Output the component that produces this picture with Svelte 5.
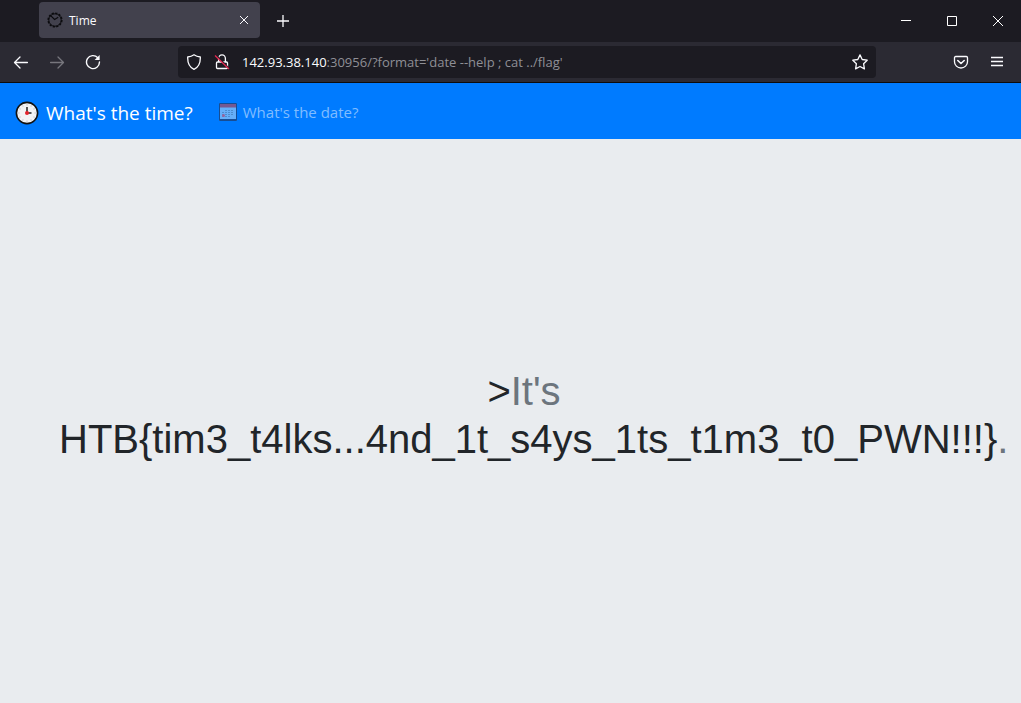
<script>
  let address = $state("142.93.38.140:30956/?format='date --help ; cat ../flag'");
  const host = $derived(address.split(':')[0]);
  const rest = $derived(address.slice(host.length));
  const ticks = Array.from({ length: 12 }, (_, i) => i * 30);
</script>

<div class="window">
  <header class="tabs">
    <div class="tab">
      <svg class="favicon" width="16" height="16" viewBox="0 0 16 16" fill="none" stroke="#0b0b0e" aria-hidden="true">
        <circle cx="8" cy="8" r="6.2" stroke-width="1" />
        <circle cx="8" cy="8" r="6.8" stroke-width="1.6" stroke-dasharray="2.2 1.36" />
        <path d="M3.4 3.4 7.6 7.4l3.6-2.2" stroke-width="1.2" />
      </svg>
      <span class="title">Time</span>
      <button aria-label="Close tab">
        <svg width="10" height="10" viewBox="0 0 10 10" stroke="#fbfbfe"><path d="m1 1 8 8M9 1 1 9" /></svg>
      </button>
    </div>
    <button class="new" aria-label="New tab">
      <svg width="14" height="14" viewBox="0 0 14 14" stroke="#fbfbfe" stroke-width="1.3"><path d="M1 7h12M7 1v12" /></svg>
    </button>
    <div class="controls">
      <button aria-label="Minimize">
        <svg width="12" height="12" viewBox="0 0 12 12" stroke="#fff"><path d="M1 5.5h10" /></svg>
      </button>
      <button aria-label="Maximize">
        <svg width="12" height="12" viewBox="0 0 12 12" stroke="#fff" fill="none"><path d="M1.5 1.5h9v9h-9z" /></svg>
      </button>
      <button aria-label="Close window">
        <svg width="12" height="12" viewBox="0 0 12 12" stroke="#fff"><path d="m1 1 10 10M11 1 1 11" /></svg>
      </button>
    </div>
  </header>

  <div class="toolbar">
    <div class="history">
      <button aria-label="Back">
        <svg width="16" height="16" viewBox="0 0 16 16" fill="none" stroke="#fbfbfe" stroke-width="1.3" stroke-linecap="round" stroke-linejoin="round"><path d="M14.4 8.5H1.6M7 3 1.5 8.5 7 14" /></svg>
      </button>
      <button aria-label="Forward" disabled>
        <svg width="16" height="16" viewBox="0 0 16 16" fill="none" stroke="#77767d" stroke-width="1.3" stroke-linecap="round" stroke-linejoin="round"><path d="M1.6 8.5h12.8M9 3l5.5 5.5L9 14" /></svg>
      </button>
      <button aria-label="Reload">
        <svg width="16" height="16" viewBox="0 0 16 16" fill="none" stroke="#fbfbfe" stroke-width="1.4" stroke-linecap="round"><path d="M12.8 3.7A6.5 6.5 0 1 0 14.5 8" /><path d="M14.6 1v5H9.6z" fill="#fbfbfe" stroke="none" /></svg>
      </button>
    </div>
    <div class="address">
      <svg width="16" height="16" viewBox="0 0 16 16" fill="none" stroke="#fbfbfe" stroke-width="1.3" stroke-linejoin="round" aria-hidden="true"><path d="M8 .8c1.8 1.3 4 2 6.3 2.2C14.5 8 13 13 8 15.3 3 13 1.5 8 1.7 3 4 2.8 6.2 2.1 8 .8z" /></svg>
      <svg width="16" height="16" viewBox="0 0 16 16" fill="none" aria-hidden="true">
        <path d="M4.6 8V4.5a3.4 3.7 0 0 1 6.8 0V8M3.5 8h9a1 1 0 0 1 1 1v4.5a1 1 0 0 1-1 1h-9a1 1 0 0 1-1-1V9a1 1 0 0 1 1-1z" stroke="#fbfbfe" stroke-width="1.3" />
        <path d="m2.2 1.2 13 13.3" stroke="#1c1b22" stroke-width="1.5" />
        <path d="m1 1.5 14 13.5" stroke="#e22850" stroke-width="1.3" />
      </svg>
      <label class="url">
        <span class="shown" aria-hidden="true"><b>{host}</b>{rest}</span>
        <input aria-label="Address" bind:value={address} spellcheck="false" />
      </label>
      <button aria-label="Bookmark">
        <svg width="16" height="16" viewBox="0 0 16 16" fill="none" stroke="#fbfbfe" stroke-width="1.3" stroke-linejoin="round"><path d="m8 .9 2.2 4.6 5 .7-3.6 3.5.8 5.2L8 12.5l-4.4 2.4.8-5.2L.8 6.2l5-.7z" /></svg>
      </button>
    </div>
    <div class="tools">
      <button aria-label="Pocket">
        <svg width="16" height="16" viewBox="0 0 16 16" fill="none" stroke="#fbfbfe" stroke-width="1.3" stroke-linecap="round" stroke-linejoin="round"><path d="M2.7 2.5h10.6a1.2 1.2 0 0 1 1.2 1.2v4a6.5 6.3 0 0 1-13 0v-4a1.2 1.2 0 0 1 1.2-1.2z" /><path d="M4.8 6.5 8 9.500l3.200-3" stroke-width="1.6" /></svg>
      </button>
      <button aria-label="Menu">
        <svg width="16" height="16" viewBox="0 0 16 16" stroke="#fbfbfe" stroke-width="1.4"><path d="M2 3.500h12M2 7.500h12M2 11.500h12" /></svg>
      </button>
    </div>
  </div>

  <nav>
    <a class="brand" href="#time">
      <svg width="24" height="24" viewBox="0 0 24 24" aria-hidden="true">
        <circle cx="12" cy="12" r="10.6" fill="#f3f3f5" stroke="#111" stroke-width="1.6" />
        {#each ticks as angle}
          <path d="M12 3.2v1.3" stroke="#b9bbc2" transform="rotate({angle} 12 12)" />
        {/each}
        <path d="M12 6v6h4.5" fill="none" stroke="#222" stroke-width="1.5" />
        <circle cx="12" cy="12" r="2" fill="#e5232c" />
      </svg>
      <span>What's the time?</span>
    </a>
    <a class="date" href="#date">
      <svg width="18" height="18" viewBox="0 0 18 18" aria-hidden="true">
        <path d="M.5.5h17v17H.5z" fill="#66aff9" stroke="#164d94" />
        <path d="M1 1h16v3.5H1z" fill="#765991" />
        <path d="M1 16.5h16" stroke="#194f96" />
        <path d="M6 7.5h9M3 9.5h12M3 11.5h12M3 13.5h9" stroke="#437fbd" stroke-dasharray="2 1" opacity=".7" />
        <circle cx="4.5" cy="12.5" r="1.5" fill="#98649c" />
      </svg>
      <span>What's the date?</span>
    </a>
  </nav>

  <main>
    <h1>&gt;<span>It's</span> HTB&lbrace;tim3_t4lks...4nd_1t_s4ys_1ts_t1m3_t0_PWN!!!&rbrace;<span>.</span></h1>
  </main>
</div>

<style>
  :global(body) { margin: 0; }
  .window { min-height: 100vh; display: flex; flex-direction: column; background: #e9ecef; font-family: "Segoe UI", "Open Sans", sans-serif; }
  button { padding: 0; border: 0; background: none; display: grid; place-items: center; }
  svg { flex: none; display: block; }
  .tabs { height: 42px; background: #1c1b22; display: flex; align-items: center; padding-left: 39px; }
  .tab { box-sizing: border-box; width: 221px; height: 36px; margin-bottom: 2px; padding: 0 11px 0 8px; display: flex; align-items: center; gap: 6px; border-radius: 4px; background: #42414d; color: #fbfbfe; font-size: 12px; }
  .title { flex: 1; }
  .new { width: 30px; height: 36px; margin-left: 8px; }
  .controls { margin-left: auto; display: flex; }
  .controls button { width: 46px; height: 40px; }
  .toolbar { box-sizing: border-box; height: 41px; background: #2b2a33; border-bottom: 1px solid #0c0c0d; display: flex; align-items: center; }
  .history { width: 178px; box-sizing: border-box; padding-left: 13px; display: flex; gap: 20px; }
  .address { box-sizing: border-box; height: 32px; flex: 1; min-width: 0; display: flex; align-items: center; gap: 12px; padding: 0 8px; border-radius: 4px; background: #1c1b22; }
  .url { flex: 1; min-width: 0; display: grid; font-size: 13px; line-height: 20px; color: #8f8f96; }
  .url > * { grid-area: 1 / 1; min-width: 0; }
  .shown { white-space: pre; overflow: hidden; }
  .shown b { font-weight: 400; color: #fbfbfe; }
  input { width: 100%; padding: 0; border: 0; outline: 0; background: none; font: inherit; color: transparent; caret-color: #fbfbfe; }
  .tools { width: 145px; box-sizing: border-box; padding-right: 16px; display: flex; justify-content: flex-end; gap: 20px; }
  nav { height: 56px; background: #007bff; display: flex; align-items: center; padding: 0 15px; gap: 26px; }
  nav a { display: flex; align-items: center; text-decoration: none; white-space: nowrap; }
  .brand { gap: 7px; color: #fff; font-size: 19px; padding-top: 4px; }
  .date { gap: 6px; color: #80bdff; font-size: 15px; padding-top: 2px; }
  main { flex: 1; display: flex; flex-direction: column; justify-content: center; padding: 0 32px 12px 59px; }
  h1 { margin: 0; text-align: center; font: 400 40px/48px "Liberation Sans", Arial, sans-serif; color: #212529; }
  h1 span { color: #6c757d; }
</style>
